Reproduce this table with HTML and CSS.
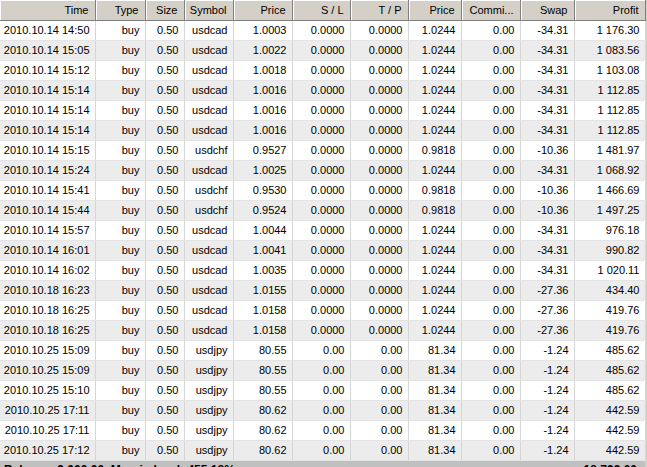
FILE: index.html
```html
<!DOCTYPE html>
<html>
<head>
<meta charset="utf-8">
<link rel="stylesheet" href="styles.css">
</head>
<body>
<div class="terminal">
<table class="grid">
<colgroup>
<col class="c-time"><col class="c-type"><col class="c-size"><col class="c-sym"><col class="c-price"><col class="c-sl"><col class="c-tp"><col class="c-price2"><col class="c-comm"><col class="c-swap"><col class="c-profit">
</colgroup>
<thead>
<tr><th>Time</th><th>Type</th><th>Size</th><th>Symbol</th><th>Price</th><th>S / L</th><th>T / P</th><th>Price</th><th>Commi...</th><th>Swap</th><th>Profit</th></tr>
</thead>
<tbody>
<tr><td>2010.10.14 14:50</td><td>buy</td><td>0.50</td><td>usdcad</td><td>1.0003</td><td>0.0000</td><td>0.0000</td><td>1.0244</td><td>0.00</td><td>-34.31</td><td>1 176.30</td></tr>
<tr><td>2010.10.14 15:05</td><td>buy</td><td>0.50</td><td>usdcad</td><td>1.0022</td><td>0.0000</td><td>0.0000</td><td>1.0244</td><td>0.00</td><td>-34.31</td><td>1 083.56</td></tr>
<tr><td>2010.10.14 15:12</td><td>buy</td><td>0.50</td><td>usdcad</td><td>1.0018</td><td>0.0000</td><td>0.0000</td><td>1.0244</td><td>0.00</td><td>-34.31</td><td>1 103.08</td></tr>
<tr><td>2010.10.14 15:14</td><td>buy</td><td>0.50</td><td>usdcad</td><td>1.0016</td><td>0.0000</td><td>0.0000</td><td>1.0244</td><td>0.00</td><td>-34.31</td><td>1 112.85</td></tr>
<tr><td>2010.10.14 15:14</td><td>buy</td><td>0.50</td><td>usdcad</td><td>1.0016</td><td>0.0000</td><td>0.0000</td><td>1.0244</td><td>0.00</td><td>-34.31</td><td>1 112.85</td></tr>
<tr><td>2010.10.14 15:14</td><td>buy</td><td>0.50</td><td>usdcad</td><td>1.0016</td><td>0.0000</td><td>0.0000</td><td>1.0244</td><td>0.00</td><td>-34.31</td><td>1 112.85</td></tr>
<tr><td>2010.10.14 15:15</td><td>buy</td><td>0.50</td><td>usdchf</td><td>0.9527</td><td>0.0000</td><td>0.0000</td><td>0.9818</td><td>0.00</td><td>-10.36</td><td>1 481.97</td></tr>
<tr><td>2010.10.14 15:24</td><td>buy</td><td>0.50</td><td>usdcad</td><td>1.0025</td><td>0.0000</td><td>0.0000</td><td>1.0244</td><td>0.00</td><td>-34.31</td><td>1 068.92</td></tr>
<tr><td>2010.10.14 15:41</td><td>buy</td><td>0.50</td><td>usdchf</td><td>0.9530</td><td>0.0000</td><td>0.0000</td><td>0.9818</td><td>0.00</td><td>-10.36</td><td>1 466.69</td></tr>
<tr><td>2010.10.14 15:44</td><td>buy</td><td>0.50</td><td>usdchf</td><td>0.9524</td><td>0.0000</td><td>0.0000</td><td>0.9818</td><td>0.00</td><td>-10.36</td><td>1 497.25</td></tr>
<tr><td>2010.10.14 15:57</td><td>buy</td><td>0.50</td><td>usdcad</td><td>1.0044</td><td>0.0000</td><td>0.0000</td><td>1.0244</td><td>0.00</td><td>-34.31</td><td>976.18</td></tr>
<tr><td>2010.10.14 16:01</td><td>buy</td><td>0.50</td><td>usdcad</td><td>1.0041</td><td>0.0000</td><td>0.0000</td><td>1.0244</td><td>0.00</td><td>-34.31</td><td>990.82</td></tr>
<tr><td>2010.10.14 16:02</td><td>buy</td><td>0.50</td><td>usdcad</td><td>1.0035</td><td>0.0000</td><td>0.0000</td><td>1.0244</td><td>0.00</td><td>-34.31</td><td>1 020.11</td></tr>
<tr><td>2010.10.18 16:23</td><td>buy</td><td>0.50</td><td>usdcad</td><td>1.0155</td><td>0.0000</td><td>0.0000</td><td>1.0244</td><td>0.00</td><td>-27.36</td><td>434.40</td></tr>
<tr><td>2010.10.18 16:25</td><td>buy</td><td>0.50</td><td>usdcad</td><td>1.0158</td><td>0.0000</td><td>0.0000</td><td>1.0244</td><td>0.00</td><td>-27.36</td><td>419.76</td></tr>
<tr><td>2010.10.18 16:25</td><td>buy</td><td>0.50</td><td>usdcad</td><td>1.0158</td><td>0.0000</td><td>0.0000</td><td>1.0244</td><td>0.00</td><td>-27.36</td><td>419.76</td></tr>
<tr><td>2010.10.25 15:09</td><td>buy</td><td>0.50</td><td>usdjpy</td><td>80.55</td><td>0.00</td><td>0.00</td><td>81.34</td><td>0.00</td><td>-1.24</td><td>485.62</td></tr>
<tr><td>2010.10.25 15:09</td><td>buy</td><td>0.50</td><td>usdjpy</td><td>80.55</td><td>0.00</td><td>0.00</td><td>81.34</td><td>0.00</td><td>-1.24</td><td>485.62</td></tr>
<tr><td>2010.10.25 15:10</td><td>buy</td><td>0.50</td><td>usdjpy</td><td>80.55</td><td>0.00</td><td>0.00</td><td>81.34</td><td>0.00</td><td>-1.24</td><td>485.62</td></tr>
<tr><td>2010.10.25 17:11</td><td>buy</td><td>0.50</td><td>usdjpy</td><td>80.62</td><td>0.00</td><td>0.00</td><td>81.34</td><td>0.00</td><td>-1.24</td><td>442.59</td></tr>
<tr><td>2010.10.25 17:11</td><td>buy</td><td>0.50</td><td>usdjpy</td><td>80.62</td><td>0.00</td><td>0.00</td><td>81.34</td><td>0.00</td><td>-1.24</td><td>442.59</td></tr>
<tr><td>2010.10.25 17:12</td><td>buy</td><td>0.50</td><td>usdjpy</td><td>80.62</td><td>0.00</td><td>0.00</td><td>81.34</td><td>0.00</td><td>-1.24</td><td>442.59</td></tr>
</tbody>
</table>
<div class="summary">
<span class="summary-left">Balance: 9 000.00  Margin level: 455.18%</span>
<span class="summary-right">18 793.00</span>
</div>
</div>
</body>
</html>
```
FILE: styles.css
```css
html, body {
  margin: 0;
  padding: 0;
  background: #ffffff;
}
.terminal {
  width: 647px;
  height: 467px;
  overflow: hidden;
  background: #d4d0c8;
  font-family: "Liberation Sans", Arial, sans-serif;
  font-size: 11px;
  color: #000;
}
.grid {
  border-collapse: collapse;
  table-layout: fixed;
  width: 645px;
  background: #fff;
}
.c-time { width: 95px; }
.c-type { width: 50px; }
.c-size { width: 39px; }
.c-sym { width: 49px; }
.c-price { width: 59px; }
.c-sl { width: 58px; }
.c-tp { width: 58px; }
.c-price2 { width: 53px; }
.c-comm { width: 59px; }
.c-swap { width: 54px; }
.c-profit { width: 71px; }
.grid th {
  height: 20px;
  box-sizing: border-box;
  padding: 0 6px 0 0;
  background: #d4d0c8;
  font-weight: normal;
  text-align: right;
  white-space: nowrap;
  overflow: hidden;
  border-right: 1px solid #808080;
  border-bottom: 1px solid #808080;
  box-shadow: inset 1px 1px 0 #ffffff;
}
.grid td {
  height: 20px;
  box-sizing: border-box;
  padding: 0 5px 0 0;
  text-align: right;
  white-space: nowrap;
  overflow: hidden;
  border-right: 1px solid #d6d6d6;
  border-bottom: 1px solid #e4e4e4;
}
.grid tbody tr:nth-child(even) td {
  background: #ececec;
}
.summary {
  height: 20px;
  display: flex;
  justify-content: space-between;
  align-items: flex-start;
  padding: 2px 8px 0 4px;
  background: #c0c0c0;
  font-weight: bold;
  font-size: 12px;
  line-height: 14px;
  width: 645px;
  box-sizing: border-box;
  white-space: pre;
}
```
